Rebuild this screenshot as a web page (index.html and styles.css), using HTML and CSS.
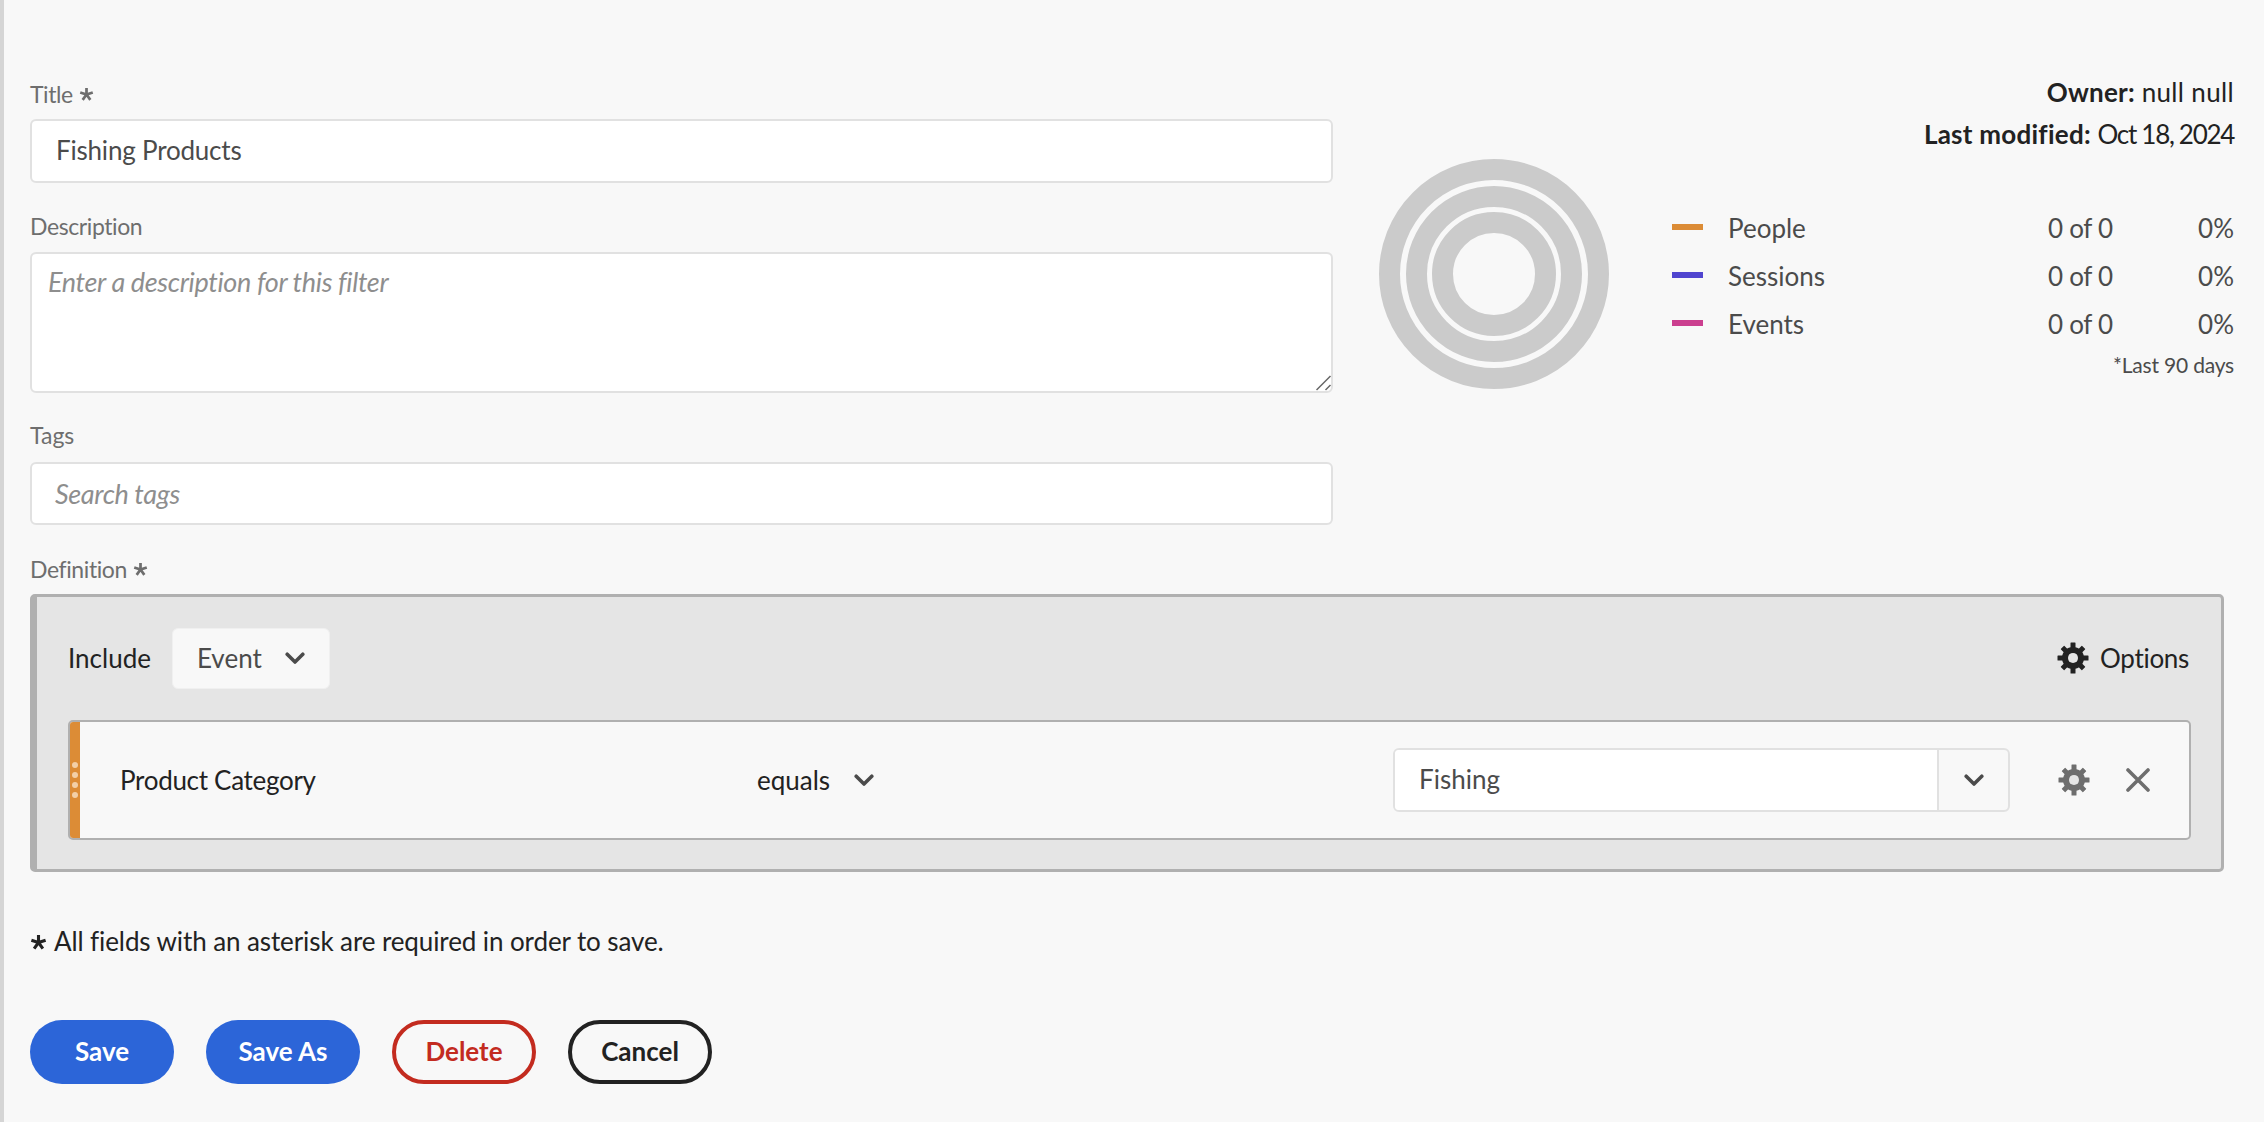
FILE: index.html
```html
<!DOCTYPE html>
<html lang="en">
<head>
<meta charset="utf-8">
<title>Edit filter</title>
<link rel="stylesheet" href="styles.css">
</head>
<body>
<svg class="sprites" width="0" height="0" aria-hidden="true">
  <defs>
    <symbol id="star" viewBox="0 0 16 16">
      <path d="M8 8V1M8 8l6.700-2.200M8 8l4.100 5.700M8 8l-4.100 5.700M8 8 1.300 5.800" fill="none" stroke="currentColor" stroke-width="2.900"/>
    </symbol>
    <symbol id="chev" viewBox="0 0 20 13">
      <path d="M2.200 2.200 10 10l7.800-7.800" fill="none" stroke="currentColor" stroke-width="3.600" stroke-linecap="round" stroke-linejoin="round"/>
    </symbol>
    <symbol id="gear" viewBox="0 0 32 32">
      <circle cx="16" cy="16" r="8" fill="none" stroke="currentColor" stroke-width="6"/>
      <g fill="currentColor">
        <rect x="13.500" y="0.500" width="5" height="31" rx="0.500"/>
        <rect x="0.500" y="13.500" width="31" height="5" rx="0.500"/>
        <rect x="13.500" y="1" width="5" height="8" rx="0.500" transform="rotate(45 16 16)"/>
        <rect x="13.500" y="1" width="5" height="8" rx="0.500" transform="rotate(135 16 16)"/>
        <rect x="13.500" y="1" width="5" height="8" rx="0.500" transform="rotate(225 16 16)"/>
        <rect x="13.500" y="1" width="5" height="8" rx="0.500" transform="rotate(315 16 16)"/>
      </g>
      <circle class="gear-hole" cx="16" cy="16" r="5"/>
    </symbol>
  </defs>
</svg>
<main class="page">
  <div class="top">
    <div class="fields">
      <label class="label label-title">Title <svg class="star"><use href="#star"/></svg></label>
      <div class="input input-value">Fishing Products</div>
      <label class="label label-desc">Description</label>
      <div class="textarea">
        <span class="placeholder">Enter a description for this filter</span>
        <svg class="grip" viewBox="0 0 16 16"><path d="M.5 15 14.500 1M9.500 15l5-5" stroke="#666" stroke-width="1.500" fill="none"/></svg>
      </div>
      <label class="label label-tags">Tags</label>
      <div class="input input-tags"><span class="placeholder">Search tags</span></div>
    </div>
    <aside class="summary">
      <div class="meta">
        <p class="meta-line"><b>Owner:</b> <span class="wide">null null</span></p>
        <p class="meta-line"><b>Last modified:</b> <span class="date">Oct 18, 2024</span></p>
      </div>
      <div class="stats">
        <svg class="donut" viewBox="0 0 230 230">
          <circle cx="115" cy="115" r="104.500"/>
          <circle cx="115" cy="115" r="77.500"/>
          <circle cx="115" cy="115" r="51.500"/>
        </svg>
        <div class="legend">
          <div class="legend-row"><i class="dash dash-people"></i><span class="legend-name">People</span><span class="legend-count">0 of 0</span><span class="legend-pct">0%</span></div>
          <div class="legend-row"><i class="dash dash-sessions"></i><span class="legend-name">Sessions</span><span class="legend-count">0 of 0</span><span class="legend-pct">0%</span></div>
          <div class="legend-row"><i class="dash dash-events"></i><span class="legend-name">Events</span><span class="legend-count">0 of 0</span><span class="legend-pct">0%</span></div>
          <div class="legend-note">*Last 90 days</div>
        </div>
      </div>
    </aside>
  </div>

  <label class="label label-def">Definition <svg class="star"><use href="#star"/></svg></label>
  <section class="definition">
    <div class="def-head">
      <span class="include">Include</span>
      <div class="select"><span>Event</span><svg class="chev"><use href="#chev"/></svg></div>
      <div class="options"><svg class="gear"><use href="#gear"/></svg><span>Options</span></div>
    </div>
    <div class="rule">
      <div class="handle"><i></i><i></i><i></i><i></i></div>
      <span class="rule-name">Product Category</span>
      <div class="rule-op"><span>equals</span><svg class="chev"><use href="#chev"/></svg></div>
      <div class="combo">
        <span class="combo-value">Fishing</span>
        <span class="combo-btn"><svg class="chev"><use href="#chev"/></svg></span>
      </div>
      <svg class="gear gear-muted"><use href="#gear"/></svg>
      <svg class="close" viewBox="0 0 24 24"><path d="M2 2l20 20M22 2 2 22" stroke="currentColor" stroke-width="3.600" stroke-linecap="round" fill="none"/></svg>
    </div>
  </section>

  <p class="required"><svg class="star"><use href="#star"/></svg> All fields with an asterisk are required in order to save.</p>

  <div class="actions">
    <button class="btn btn-primary btn-save">Save</button>
    <button class="btn btn-primary btn-saveas">Save As</button>
    <button class="btn btn-delete">Delete</button>
    <button class="btn btn-cancel">Cancel</button>
  </div>
</main>
</body>
</html>
```
FILE: styles.css
```css
* { box-sizing: border-box; }
html, body { margin: 0; height: 100%; }
body {
  background: #f8f8f8;
  font-family: Lato, "Open Sans", sans-serif;
  font-size: 26px;
  color: #222;
  overflow: hidden;
}
.sprites { position: absolute; }
.page {
  height: 1122px;
  border-left: 4px solid #d5d5d5;
  padding: 0 30px 0 26px;
  display: flex;
  flex-direction: column;
}
.top { display: flex; gap: 46px; height: 554px; }
.fields { width: 1303px; display: flex; flex-direction: column; }
.label {
  display: flex;
  align-items: center;
  gap: 6px;
  height: 30px;
  font-size: 23px;
  letter-spacing: -0.4px;
  color: #6e6e6e;
}
.label-title { margin-top: 79px; margin-bottom: 10px; }
.label-desc { margin-top: 28px; margin-bottom: 11px; }
.label-tags { margin-top: 27px; margin-bottom: 12px; letter-spacing: 0; }
.label-def { margin-bottom: 10px; }
.star { width: 15px; height: 15px; color: #6e6e6e; flex: none; }
.input {
  height: 64px;
  background: #fff;
  border: 2px solid #e1e1e1;
  border-radius: 6px;
  padding: 0 24px 2px;
  display: flex;
  align-items: center;
}
.input-tags { height: 63px; padding: 0 23px; }
.input-value { color: #4b4b4b; letter-spacing: -0.2px; }
.placeholder { font-style: italic; font-size: 27px; letter-spacing: -0.35px; color: #8e8e8e; }
.textarea {
  position: relative;
  height: 141px;
  background: #fff;
  border: 2px solid #e1e1e1;
  border-radius: 6px;
  padding: 11px 16px;
}
.grip { position: absolute; right: -1px; bottom: 0; width: 16px; height: 16px; }
.summary { flex: 1; display: flex; flex-direction: column; }
.meta { padding-top: 71px; text-align: right; height: 159px; }
.meta-line { margin: 0; height: 42px; line-height: 42px; }
.meta b { font-weight: 700; letter-spacing: 0.25px; }
.wide { letter-spacing: 0.35px; }
.date { letter-spacing: -1.3px; }
.stats { display: flex; gap: 63px; }
.donut { width: 230px; height: 230px; flex: none; fill: none; stroke: #cbcbcb; stroke-width: 21; }
.legend { flex: 1; padding-top: 45px; color: #4b4b4b; }
.legend-row { display: flex; align-items: center; height: 48px; }
.dash { width: 31px; height: 6px; margin-right: 25px; margin-top: -2px; }
.dash-people { background: #dc8c36; }
.dash-sessions { background: #5045cf; }
.dash-events { background: #cb3f8f; }
.legend-name { width: 320px; }
.legend-count { width: 149px; letter-spacing: -0.3px; }
.legend-pct { flex: 1; text-align: right; }
.legend-note { text-align: right; font-size: 21px; letter-spacing: -0.2px; line-height: 34px; }
.definition {
  width: 2194px;
  height: 278px;
  background: #e5e5e5;
  border: 3px solid #b0b0b0;
  border-left-width: 7px;
  border-radius: 5px;
  padding: 0 30px 0 31px;
  display: flex;
  flex-direction: column;
}
.def-head { display: flex; align-items: center; height: 122px; margin-bottom: 1px; }
.include { margin-right: 21px; }
.select {
  width: 158px;
  height: 61px;
  background: #f8f8f8;
  border: 1px solid #f0f0f0;
  border-radius: 6px;
  padding: 0 24px;
  display: flex;
  align-items: center;
  justify-content: space-between;
  color: #4b4b4b;
}
.chev { width: 20px; height: 13px; color: #4b4b4b; flex: none; }
.options { margin-left: auto; margin-right: 2px; display: flex; align-items: center; gap: 11px; letter-spacing: -0.3px; }
.gear { width: 32px; height: 32px; color: #222; flex: none; }
.gear-hole { fill: #e5e5e5; }
.rule {
  height: 120px;
  background: #f8f8f8;
  border: 2px solid #b0b0b0;
  border-radius: 5px;
  display: flex;
  align-items: center;
  overflow: hidden;
}
.handle {
  width: 10px;
  height: 100%;
  background: #dc8c36;
  display: flex;
  flex-direction: column;
  justify-content: center;
  align-items: center;
  gap: 4px;
  flex: none;
}
.handle i { width: 6px; height: 6px; border-radius: 50%; background: #f3cfa6; }
.rule-name { width: 637px; margin-left: 40px; flex: none; letter-spacing: -0.3px; }
.rule-op { display: flex; align-items: center; gap: 24px; width: 636px; flex: none; }
.combo {
  width: 617px;
  height: 64px;
  flex: none;
  display: flex;
  background: #f8f8f8;
  border: 2px solid #e1e1e1;
  border-radius: 6px;
  color: #4b4b4b;
  overflow: hidden;
}
.combo-value {
  flex: 1;
  background: #fff;
  padding: 0 0 2px 24px;
  display: flex;
  align-items: center;
  border-right: 2px solid #e1e1e1;
}
.combo-btn { width: 69px; display: flex; align-items: center; justify-content: center; }
.gear-muted { color: #6e6e6e; margin-left: 48px; }
.gear-muted .gear-hole { fill: #f8f8f8; }
.close { width: 24px; height: 24px; margin-left: 36px; color: #6e6e6e; }
.required { margin: 54px 0 0; height: 30px; line-height: 30px; display: flex; align-items: center; gap: 7px; letter-spacing: -0.1px; }
.required .star { width: 17px; height: 17px; color: #222; margin-top: 2px; }
.actions { display: flex; gap: 32px; margin-top: 64px; }
.btn {
  height: 64px;
  border-radius: 32px;
  border: 4px solid transparent;
  background: transparent;
  font: 700 26px Lato, "Open Sans", sans-serif;
  padding: 0 0 2px;
}
.btn-primary { background: #2c65d8; color: #fff; }
.btn-save { width: 144px; }
.btn-saveas { width: 154px; }
.btn-delete { width: 144px; border-color: #c32b1f; color: #c32b1f; }
.btn-cancel { width: 144px; border-color: #222; color: #222; }
```
